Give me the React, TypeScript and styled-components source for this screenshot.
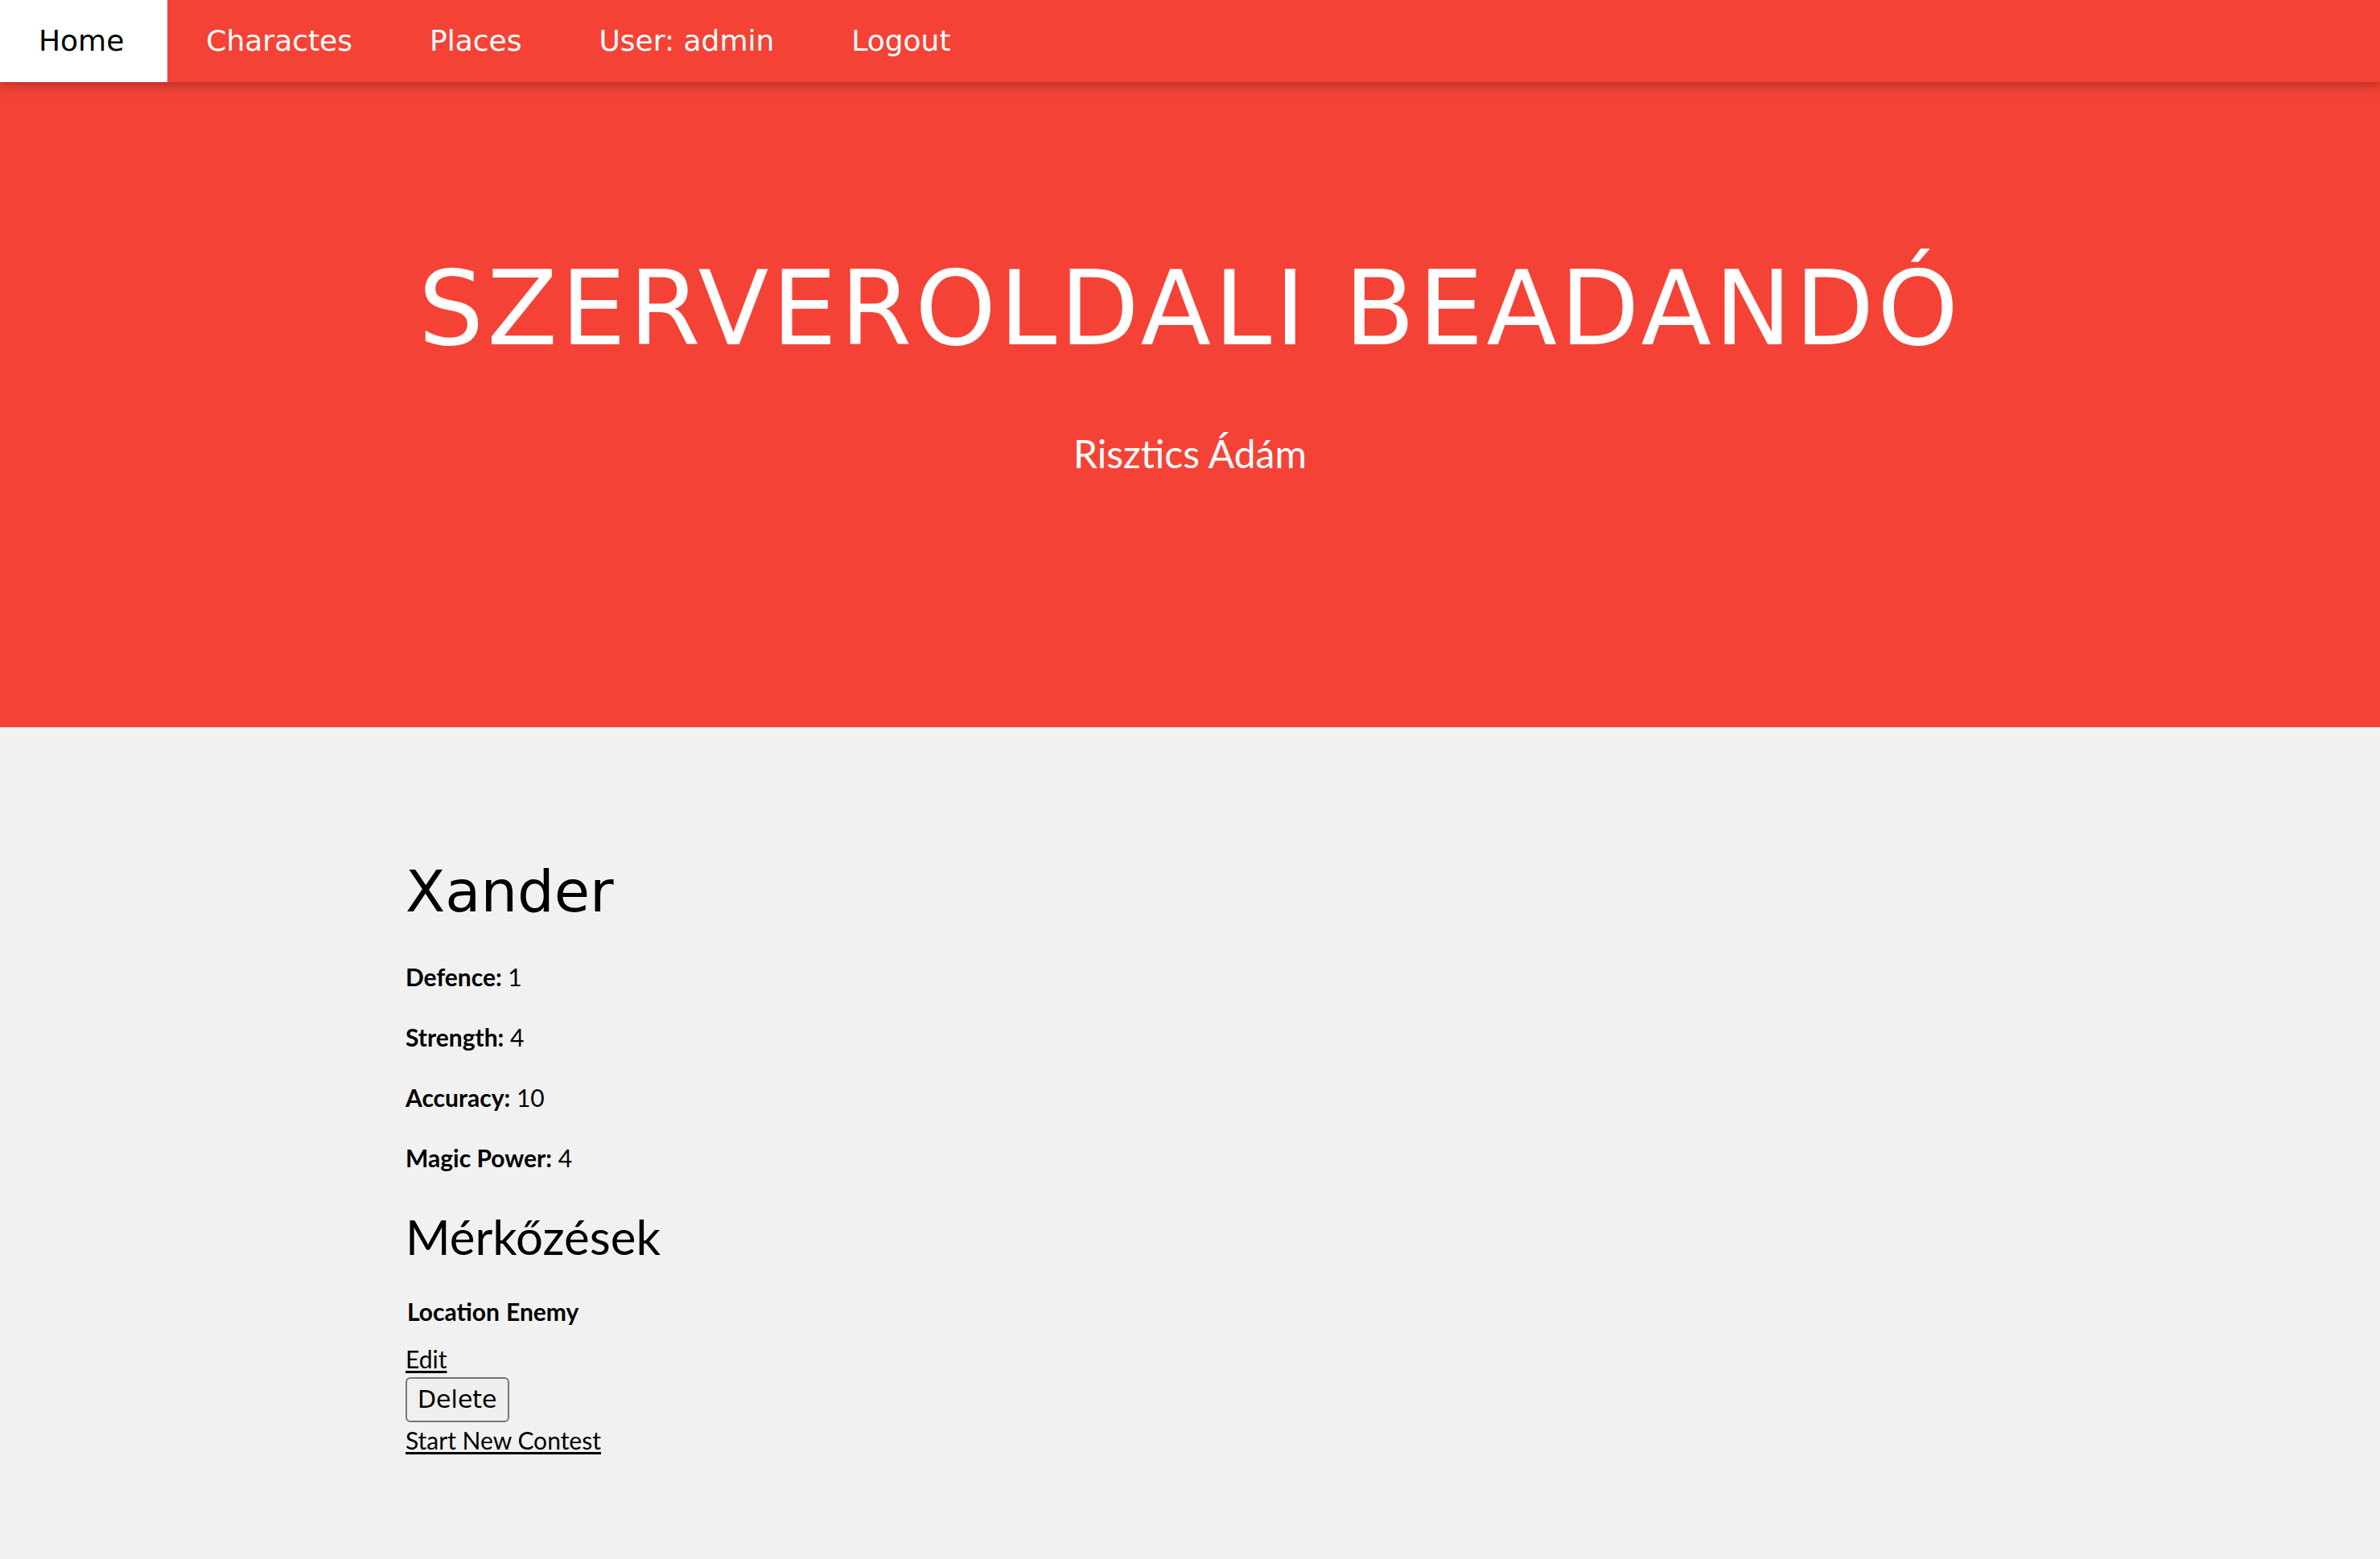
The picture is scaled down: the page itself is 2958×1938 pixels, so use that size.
import React from 'react'
import styled, { createGlobalStyle } from 'styled-components'

const GlobalStyle = createGlobalStyle`
  html, body {
    margin: 0;
    padding: 0;
    background: #f1f1f1;
  }
  body {
    font-family: Lato, "Liberation Sans", sans-serif;
    font-size: 30px;
    line-height: 1.5;
    color: #000;
  }
`

const heading = `"DejaVu Sans", "Liberation Sans", sans-serif`

const Page = styled.div`
  min-height: 1938px;
  background: #f1f1f1;
`

const TopBar = styled.nav`
  position: relative;
  z-index: 2;
  display: flex;
  background: #f44336;
  box-shadow: 0 4px 10px 0 rgba(0, 0, 0, 0.16), 0 4px 20px 0 rgba(0, 0, 0, 0.12);
`

const NavItem = styled.a<{ $active?: boolean }>`
  display: block;
  padding: ${p => (p.$active ? '24px 54px 24px 48px' : '24px 48px')};
  font-family: ${heading};
  font-size: 36px;
  line-height: 54px;
  color: ${p => (p.$active ? '#000' : '#fff')};
  background: ${p => (p.$active ? '#fff' : 'transparent')};
  text-decoration: none;
  white-space: nowrap;
`

const Hero = styled.header`
  background: #f44336;
  color: #fff;
  text-align: center;
  padding: 154px 32px 256px;
`

const HeroTitle = styled.h1`
  margin: 32px;
  font-family: ${heading};
  font-weight: 400;
  font-size: 128px;
  line-height: 192px;
  letter-spacing: 4px;
`

const HeroSub = styled.p`
  margin: 48px 0;
  font-size: 48px;
  line-height: 72px;
`

const Content = styled.main`
  width: 1950px;
  margin: 0 auto;
  padding: 130px 0 126px;
`

const Name = styled.h1`
  margin: 20px 0;
  font-family: ${heading};
  font-weight: 400;
  font-size: 72px;
  line-height: 108px;
`

const Stat = styled.p`
  margin: 30px 0;
  line-height: 45px;

  b {
    font-weight: 700;
  }
`

const SubTitle = styled.h2`
  margin: 20px 0;
  font-weight: 400;
  font-size: 60px;
  line-height: 90px;
`

const Matches = styled.table`
  border-collapse: separate;
  border-spacing: 4px;
  margin-left: -4px;

  th, td {
    padding: 2px;
    line-height: 45px;
    text-align: left;
  }
  td {
    line-height: 0;
  }
`

const TextLink = styled.a`
  display: block;
  width: fit-content;
  color: #000;
  text-decoration: underline;
  text-underline-offset: 3px;
  line-height: 45px;
`

const DeleteButton = styled.button`
  display: block;
  margin: 0;
  padding: 2px 13px;
  font-family: ${heading};
  font-size: 30px;
  line-height: 48px;
  color: #000;
  background: #efefef;
  border: 2px solid #767676;
  border-radius: 6px;
`

const stats = [
  { label: 'Defence', value: 1 },
  { label: 'Strength', value: 4 },
  { label: 'Accuracy', value: 10 },
  { label: 'Magic Power', value: 4 },
]

export default function App() {
  return (
    <Page>
      <GlobalStyle />
      <TopBar>
        <NavItem $active href="#">Home</NavItem>
        <NavItem href="#">Charactes</NavItem>
        <NavItem href="#">Places</NavItem>
        <NavItem href="#">User: admin</NavItem>
        <NavItem href="#">Logout</NavItem>
      </TopBar>
      <Hero>
        <HeroTitle>SZERVEROLDALI BEADANDÓ</HeroTitle>
        <HeroSub>Risztics Ádám</HeroSub>
      </Hero>
      <Content>
        <Name>Xander</Name>
        {stats.map(s => (
          <Stat key={s.label}>
            <b>{s.label}:</b> {s.value}
          </Stat>
        ))}
        <SubTitle>Mérkőzések</SubTitle>
        <Matches>
          <thead>
            <tr>
              <th>Location</th>
              <th>Enemy</th>
            </tr>
          </thead>
          <tbody>
            <tr>
              <td></td>
              <td></td>
            </tr>
          </tbody>
        </Matches>
        <TextLink href="#">Edit</TextLink>
        <DeleteButton>Delete</DeleteButton>
        <TextLink href="#">Start New Contest</TextLink>
      </Content>
    </Page>
  )
}
